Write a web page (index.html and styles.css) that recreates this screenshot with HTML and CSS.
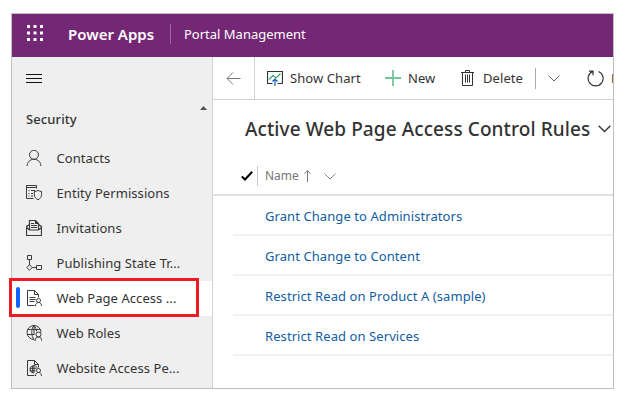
FILE: index.html
```html
<!DOCTYPE html>
<html lang="en">
<head>
<meta charset="utf-8">
<title>Portal Management</title>
<link rel="stylesheet" href="styles.css">
</head>
<body>
<div class="app">
  <header class="topbar">
    <svg class="waffle" width="16" height="16" viewBox="0 0 16 16" fill="#fff"><path d="M0 0h3v3H0zM6.500 0h3v3h-3zM13 0h3v3h-3zM0 6.500h3v3H0zM6.500 6.500h3v3h-3zM13 6.500h3v3h-3zM0 13h3v3H0zM6.500 13h3v3h-3zM13 13h3v3h-3z"/></svg>
    <span class="brand">Power Apps</span>
    <span class="area">Portal Management</span>
  </header>
  <div class="body">
    <nav class="sidebar">
      <div class="menu"><svg width="16" height="10" viewBox="0 0 16 10" stroke="#111"><path d="M0 .5h16M0 4.500h16M0 8.500h16"/></svg></div>
      <div class="group"><span>Security</span></div>
      <ul class="items">
        <li><svg viewBox="0 0 16 16"><circle cx="8" cy="4.800" r="4.500"/><path d="M1 16c.3-4 3-6.700 7-6.700s6.700 2.700 7 6.700"/></svg><span>Contacts</span></li>
        <li><svg viewBox="0 0 16 16"><path d="M7.500 13.500H.5V.5h10v3M.5 2.500h10M2.500 5.500h1M5 5.500h4M2.500 8.500h1M5 8.500h2M2.500 11h1M5 11h2M12 5.300c1.300.9 2.200 1.200 3.600 1.200v3.300c0 2.200-1.500 3.900-3.600 4.900-2.200-1-3.700-2.700-3.700-4.900V6.500c1.500 0 2.500-.3 3.700-1.200z"/></svg><span>Entity Permissions</span></li>
        <li><svg viewBox="0 0 16 16"><path d="M3.500 4.500 .5 6.500v9h15v-9l-3-2M.5 7.500l3 2.500h9l3-2.500M3.500 9.500v-9h6l3 3v6M9.500.5v3h3M5 3.500h3M5 5.500h6M5 7.500h6" stroke-width="1.200"/></svg><span>Invitations</span></li>
        <li><svg viewBox="0 0 16 16"><path d="M1.500.5h4v4h-4zM10.500 10.500h5v4h-5zM3.500 4.500v5.500M6.200 12.500h4.300M3.500 9.800l2.700 2.700-2.700 2.700-2.700-2.700z"/></svg><span>Publishing State Tr...</span></li>
        <li class="current"><svg viewBox="0 0 16 16"><path d="M8.500 15.500H1.500V.5h7l4 4v3M8.500.5v4h4M3.500 7.500h6M3.500 9.500h6M3.500 11.500h5"/><circle cx="12.500" cy="10.500" r="2"/><path d="M9.500 16c0-2.300 1.300-3.500 3-3.500s3 1.200 3 3.500"/></svg><span>Web Page Access ...</span></li>
        <li><svg viewBox="0 0 16 16"><path d="M8 14.500A7 7 0 1 1 15 7.500M8 14.500C5 11 5 4 8 .5M8 .5c1.800 2 2.500 4 2.600 6M1.500 4.500h13M1 9.500h7.500M8 .5v9"/><circle cx="12.500" cy="9.500" r="2.500"/><path d="M9 16c0-2.700 1.500-4 3.500-4s3.300 1.300 3.300 4"/></svg><span>Web Roles</span></li>
        <li><svg viewBox="0 0 16 16"><path d="M8.500 15.500H1.500V.5h7l4 4v3M8.500.5v4h4M8 13a3.700 3.700 0 1 1 3.200-5.200M3.500 8.300h7M3.500 10.700h6M6.600 5.800v7M8 5.800v7"/><circle cx="12.500" cy="10.500" r="2"/><path d="M9.500 16c0-2.300 1.300-3.500 3-3.500s3 1.200 3 3.500"/></svg><span>Website Access Pe...</span></li>
      </ul>
      <div class="scrollbar"><svg width="7" height="4" viewBox="0 0 7 4"><path d="M0 4 3.500 0 7 4z" fill="#505050"/></svg></div>
      <div class="highlight"></div>
    </nav>
    <main class="main">
      <div class="commands">
        <div class="back"><svg width="15" height="13" viewBox="0 0 15 13" fill="none" stroke="#777"><path d="M14.500 6.500H1M7 .5l-6 6 6 6"/></svg></div>
        <div class="command chart"><svg width="16" height="16" viewBox="0 0 16 16" fill="none"><path d="M5.500 13.500h-5v-12h15v12h-5" stroke="#333" stroke-width="1.200"/><path d="m2 9.500 4-4 3 2.500 4.500-4.500" stroke="#35a56b" stroke-width="1.200"/><path d="M8 16V9M5.500 11.500 8 9l2.500 2.500" stroke="#1160b7" stroke-width="1.200"/></svg><span>Show Chart</span></div>
        <div class="command new"><svg width="16" height="16" viewBox="0 0 16 16" stroke="#74c69a" stroke-width="1.800"><path d="M0 8h16M8 0v16"/></svg><span>New</span></div>
        <div class="command delete"><svg width="13" height="16" viewBox="0 0 13 16" fill="none" stroke="#333"><path d="M0 2.500h13M4.500 2.500v-2h4v2M1.500 2.500v13h10v-13M4.500 4.500v8M6.500 4.500v8M8.500 4.500v8"/></svg><span>Delete</span></div>
        <div class="more"><svg width="12" height="7" viewBox="0 0 12 7" fill="none" stroke="#666"><path d="m.5.5 5.500 5.500L11.500.5"/></svg></div>
        <div class="command refresh"><svg width="17" height="17" viewBox="0 0 17 17" fill="none" stroke="#333" stroke-width="1.200"><path d="M11.500 1.500A7.500 7.500 0 1 1 5.500 1.600M2 1.200h4v4"/></svg><span>Refresh</span></div>
      </div>
      <div class="title"><h1>Active Web Page Access Control Rules</h1><svg width="13" height="8" viewBox="0 0 13 8" fill="none" stroke="#333" stroke-width="1.300"><path d="m.7.700 5.800 5.800L12.300.7"/></svg></div>
      <div class="columns">
        <svg class="check" width="12" height="10" viewBox="0 0 12 10" fill="none" stroke="#000" stroke-width="2"><path d="m.8 5.500 3.200 3L11.200.8"/></svg>
        <div class="name"><span>Name</span><svg width="7" height="12" viewBox="0 0 7 12" fill="none" stroke="#777"><path d="M3.500 12V.7M.5 3.700l3-3 3 3"/></svg><svg width="12" height="7" viewBox="0 0 12 7" fill="none" stroke="#888"><path d="m.5.5 5.500 5.500L11.500.5"/></svg></div>
      </div>
      <ul class="rows">
        <li><span>Grant Change to Administrators</span></li>
        <li><span>Grant Change to Content</span></li>
        <li><span>Restrict Read on Product A (sample)</span></li>
        <li><span>Restrict Read on Services</span></li>
      </ul>
    </main>
  </div>
</div>
</body>
</html>
```
FILE: styles.css
```css
* { box-sizing: border-box; }
body { margin: 0; padding: 13px 0 0 11px; background: #fff; color: #333; font: 13px/20px "Noto Sans", "Open Sans", sans-serif; }
svg { flex: none; display: block; }
ul { list-style: none; margin: 0; padding: 0; }
span, h1 { white-space: nowrap; }
.app { width: 603px; height: 376px; border: 1px solid #bfbfbf; display: flex; flex-direction: column; }
.topbar { height: 43px; flex: none; background: #742774; color: #fff; display: flex; align-items: center; padding-left: 15px; }
.waffle { margin-top: -5px; }
.brand { width: 102px; margin-left: 25px; font-size: 15px; font-weight: 600; margin-top: -3px; }
.area { height: 20px; padding-left: 13px; border-left: 1px solid #9d689d; margin-top: -4px; }
.body { flex: 1; display: flex; min-height: 0; }
.sidebar { position: relative; width: 201px; flex: none; background: #efefef; border-right: 1px solid #d2d2d2; }
.menu { height: 42px; padding: 17px 0 0 14px; }
.group { height: 42px; padding: 10px 0 0 14px; font-weight: 500; letter-spacing: .1px; }
.items { letter-spacing: .06px; }
.items li { height: 35px; display: flex; align-items: center; gap: 14.5px; padding: 0 0 2px 14px; }
.items svg { width: 16px; height: 16px; fill: none; stroke: #3a3a3a; }
.items .current { background: #fff; position: relative; }
.current::before { content: ""; position: absolute; left: 4px; top: 6px; width: 4px; height: 21px; border-radius: 2px; background: #0f62fe; }
.scrollbar { position: absolute; right: 0; top: 42px; width: 17px; height: 99px; padding: 7px 0 0 5px; }
.highlight { position: absolute; left: -3px; top: 221px; width: 190px; height: 39px; border: 3px solid #ed1c24; }
.main { flex: 1; min-width: 0; overflow: hidden; }
.commands { height: 43px; border-bottom: 1px solid #d2d2d2; display: flex; align-items: center; }
.back { width: 42px; height: 42px; border-right: 1px solid #d2d2d2; padding: 15px 0 0 13px; flex: none; }
.command { display: flex; align-items: center; flex: none; letter-spacing: .08px; }
.chart { width: 118px; padding-left: 12px; gap: 7px; }
.new { width: 76px; padding-left: 12px; gap: 7px; }
.delete { width: 86px; padding-left: 12px; gap: 9px; }
.more { height: 21px; width: 52px; border-left: 1px solid #aaa; padding: 7px 0 0 12px; flex: none; }
.refresh { gap: 7px; }
.title { height: 60px; display: flex; align-items: center; padding: 0 0 3px 32px; gap: 8px; }
h1 { margin: 0; font-size: 19px; line-height: 28px; font-weight: 500; width: 345px; letter-spacing: .09px; }
.columns { height: 36px; border-bottom: 2px solid #dfdfdf; display: flex; align-items: center; padding: 0 0 2px 28px; gap: 4px; }
.name { height: 20px; border-left: 1px solid #c6c6c6; padding-left: 7px; display: flex; align-items: center; font-size: 12px; color: #777; }
.name span { width: 39px; }
.name svg + svg { margin-left: 13px; }
.rows { margin-left: 20px; letter-spacing: .08px; }
.rows li { height: 40px; border-bottom: 2px solid #f2f2f2; padding: 10px 0 0 32px; color: #115ea3; }
```
